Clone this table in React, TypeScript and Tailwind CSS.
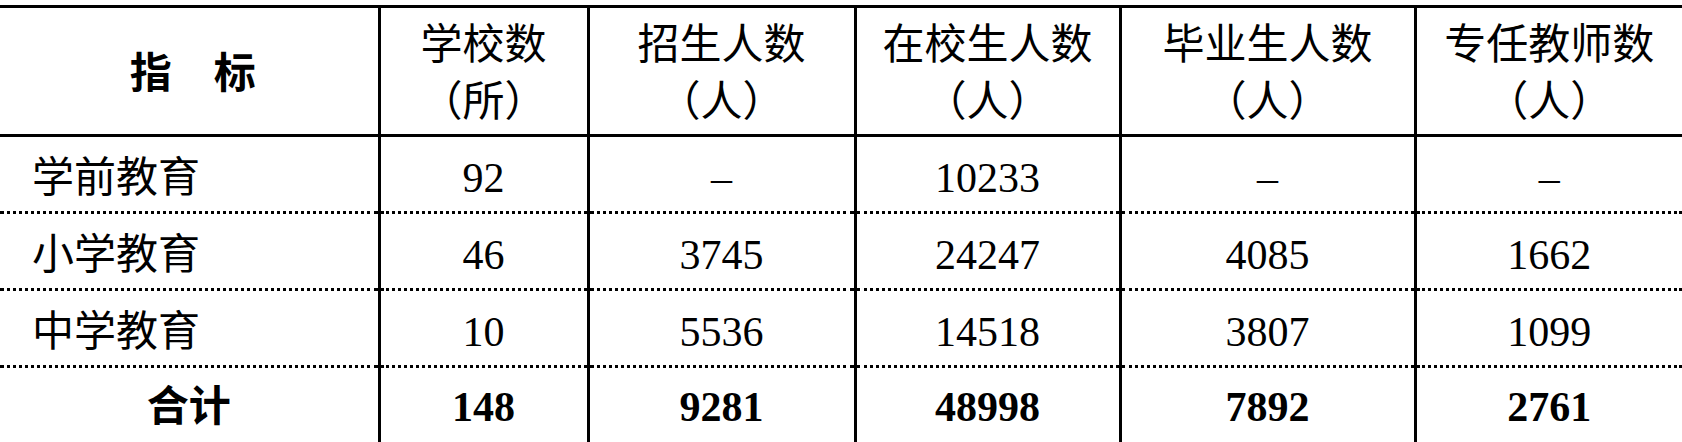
const cols = ["w-[379px]", "w-[209px]", "w-[267px]", "w-[265px]", "w-[295px]", "w-[267px]"];

const heads = [
  ["学校数", "（所）"],
  ["招生人数", "（人）"],
  ["在校生人数", "（人）"],
  ["毕业生人数", "（人）"],
  ["专任教师数", "（人）"],
];

const rows = [
  { name: "学前教育", values: ["92", "–", "10233", "–", "–"] },
  { name: "小学教育", values: ["46", "3745", "24247", "4085", "1662"] },
  { name: "中学教育", values: ["10", "5536", "14518", "3807", "1099"] },
];

const total = ["148", "9281", "48998", "7892", "2761"];

export default function App() {
  return (
    <div className="h-[442px] w-[1682px] overflow-hidden bg-white pt-[5px] font-['Liberation_Serif','Noto_Sans_CJK_SC',serif] text-[42px] text-black">
      <table className="w-[1682px] table-fixed border-collapse">
        <colgroup>
          {cols.map((c) => (
            <col key={c} className={c} />
          ))}
        </colgroup>
        <thead>
          <tr className="h-[129px]">
            <th className="border-t-[3px] border-b-[3px] border-r-[3px] border-black pl-[8px] pt-[6px] text-center font-bold">
              指　标
            </th>
            {heads.map(([a, b], i) => (
              <th
                key={a}
                className={
                  "border-t-[3px] border-b-[3px] border-black pt-[6px] text-center font-normal leading-[57px] " +
                  (i < heads.length - 1 ? "border-r-[3px]" : "")
                }
              >
                <div>{a}</div>
                <div>{b}</div>
              </th>
            ))}
          </tr>
        </thead>
        <tbody>
          {rows.map((r) => (
            <tr key={r.name} className="h-[77px]">
              <td className="border-b-[3px] border-r-[3px] border-solid border-black pl-[32px] pt-[8px] text-left [border-bottom-style:dotted]">
                {r.name}
              </td>
              {r.values.map((v, i) => (
                <td
                  key={i}
                  className={
                    "border-b-[3px] border-solid border-black pt-[8px] text-center [border-bottom-style:dotted] " +
                    (i < r.values.length - 1 ? "border-r-[3px]" : "")
                  }
                >
                  {v}
                </td>
              ))}
            </tr>
          ))}
          <tr className="h-[76px]">
            <td className="border-b-2 border-r-[3px] border-black pt-[6px] text-center font-bold">合计</td>
            {total.map((v, i) => (
              <td
                key={i}
                className={
                  "border-b-2 border-black pt-[6px] text-center font-bold " +
                  (i < total.length - 1 ? "border-r-[3px]" : "")
                }
              >
                {v}
              </td>
            ))}
          </tr>
        </tbody>
      </table>
    </div>
  );
}
